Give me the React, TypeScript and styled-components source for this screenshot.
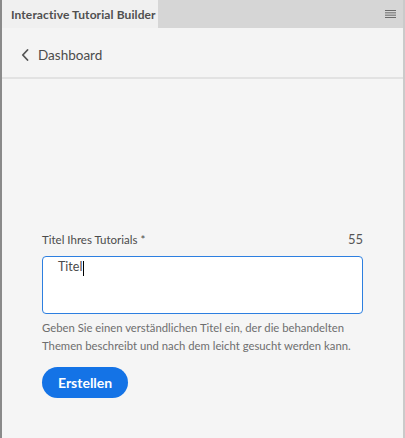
import React from "react";
import styled, { createGlobalStyle } from "styled-components";

const Global = createGlobalStyle`
  html, body { margin: 0; padding: 0; background: #f5f5f5; }
  body { font-family: Lato, "Open Sans", sans-serif; }
  * { box-sizing: border-box; }
`;

const Panel = styled.div`
  width: 405px;
  height: 438px;
  display: flex;
  flex-direction: column;
  background: #f5f5f5;
  border-left: 2px solid #8a8a8a;
  border-right: 2px solid #cacaca;
  overflow: hidden;
`;

const TabBar = styled.div`
  height: 28px;
  flex: none;
  display: flex;
  align-items: stretch;
  background: #d6d6d6;
`;

const Tab = styled.div`
  width: 156px;
  display: flex;
  align-items: center;
  padding-left: 9px;
  background: #f0f0f0;
  color: #4f4f4f;
  font-size: 12px;
  font-weight: 700;
  white-space: nowrap;
  letter-spacing: 0.1px;
`;

const MenuButton = styled.div`
  margin-left: auto;
  width: 22px;
  display: flex;
  align-items: center;
  justify-content: center;
  padding-right: 4px;
`;

const Header = styled.div`
  height: 51px;
  flex: none;
  display: flex;
  align-items: center;
  gap: 9px;
  padding-left: 19px;
  padding-top: 4px;
  border-bottom: 2px solid #e2e2e2;
  background: #f4f4f4;
  color: #4b4b4b;
  font-size: 13.5px;
`;

const Body = styled.div`
  flex: 1;
  display: flex;
  flex-direction: column;
  padding: 152px 40px 0 40px;
  background: #f5f5f5;
`;

const LabelRow = styled.div`
  display: flex;
  justify-content: space-between;
  align-items: baseline;
  font-size: 11.5px;
  color: #4b4b4b;
  margin-bottom: 9px;
`;

const Count = styled.span`
  font-size: 13px;
  color: #555;
`;

const TitleInput = styled.div`
  height: 58px;
  border: 1px solid #2d7fe0;
  border-radius: 4px;
  background: #ffffff;
  padding: 2px 15px;
  font-size: 12.5px;
  color: #4b4b4b;
  display: flex;
  align-items: flex-start;
`;

const Caret = styled.span`
  display: inline-block;
  width: 1px;
  height: 15px;
  margin-top: 2px;
  margin-left: 1px;
  background: #000;
`;

const Help = styled.p`
  margin: 5px 0 0 0;
  font-size: 11.3px;
  line-height: 18px;
  color: #6e6e6e;
`;

const Button = styled.button`
  margin-top: 12px;
  align-self: flex-start;
  height: 31px;
  padding: 0 16px;
  border: none;
  border-radius: 16px;
  background: #1473e6;
  color: #fff;
  font-family: inherit;
  font-size: 14px;
  font-weight: 700;
`;

export default function App() {
  return (
    <>
      <Global />
      <Panel>
        <TabBar>
          <Tab>Interactive Tutorial Builder</Tab>
          <MenuButton>
            <svg width="11" height="8" viewBox="0 0 11 8">
              <g fill="#6a6a6a">
                <rect x="0" y="0" width="11" height="1" />
                <rect x="0" y="2.33" width="11" height="1" />
                <rect x="0" y="4.66" width="11" height="1" />
                <rect x="0" y="7" width="11" height="1" />
              </g>
            </svg>
          </MenuButton>
        </TabBar>
        <Header>
          <svg width="8" height="12" viewBox="0 0 8 12">
            <path d="M6.5 1 L1.8 6 L6.5 11" fill="none" stroke="#555" strokeWidth="1.8" strokeLinecap="round" strokeLinejoin="round" />
          </svg>
          <span>Dashboard</span>
        </Header>
        <Body>
          <LabelRow>
            <span>Titel Ihres Tutorials *</span>
            <Count>55</Count>
          </LabelRow>
          <TitleInput>
            <span>Titel</span>
            <Caret />
          </TitleInput>
          <Help>
            Geben Sie einen verständlichen Titel ein, der die behandelten Themen beschreibt und nach dem leicht gesucht werden kann.
          </Help>
          <Button>Erstellen</Button>
        </Body>
      </Panel>
    </>
  );
}
